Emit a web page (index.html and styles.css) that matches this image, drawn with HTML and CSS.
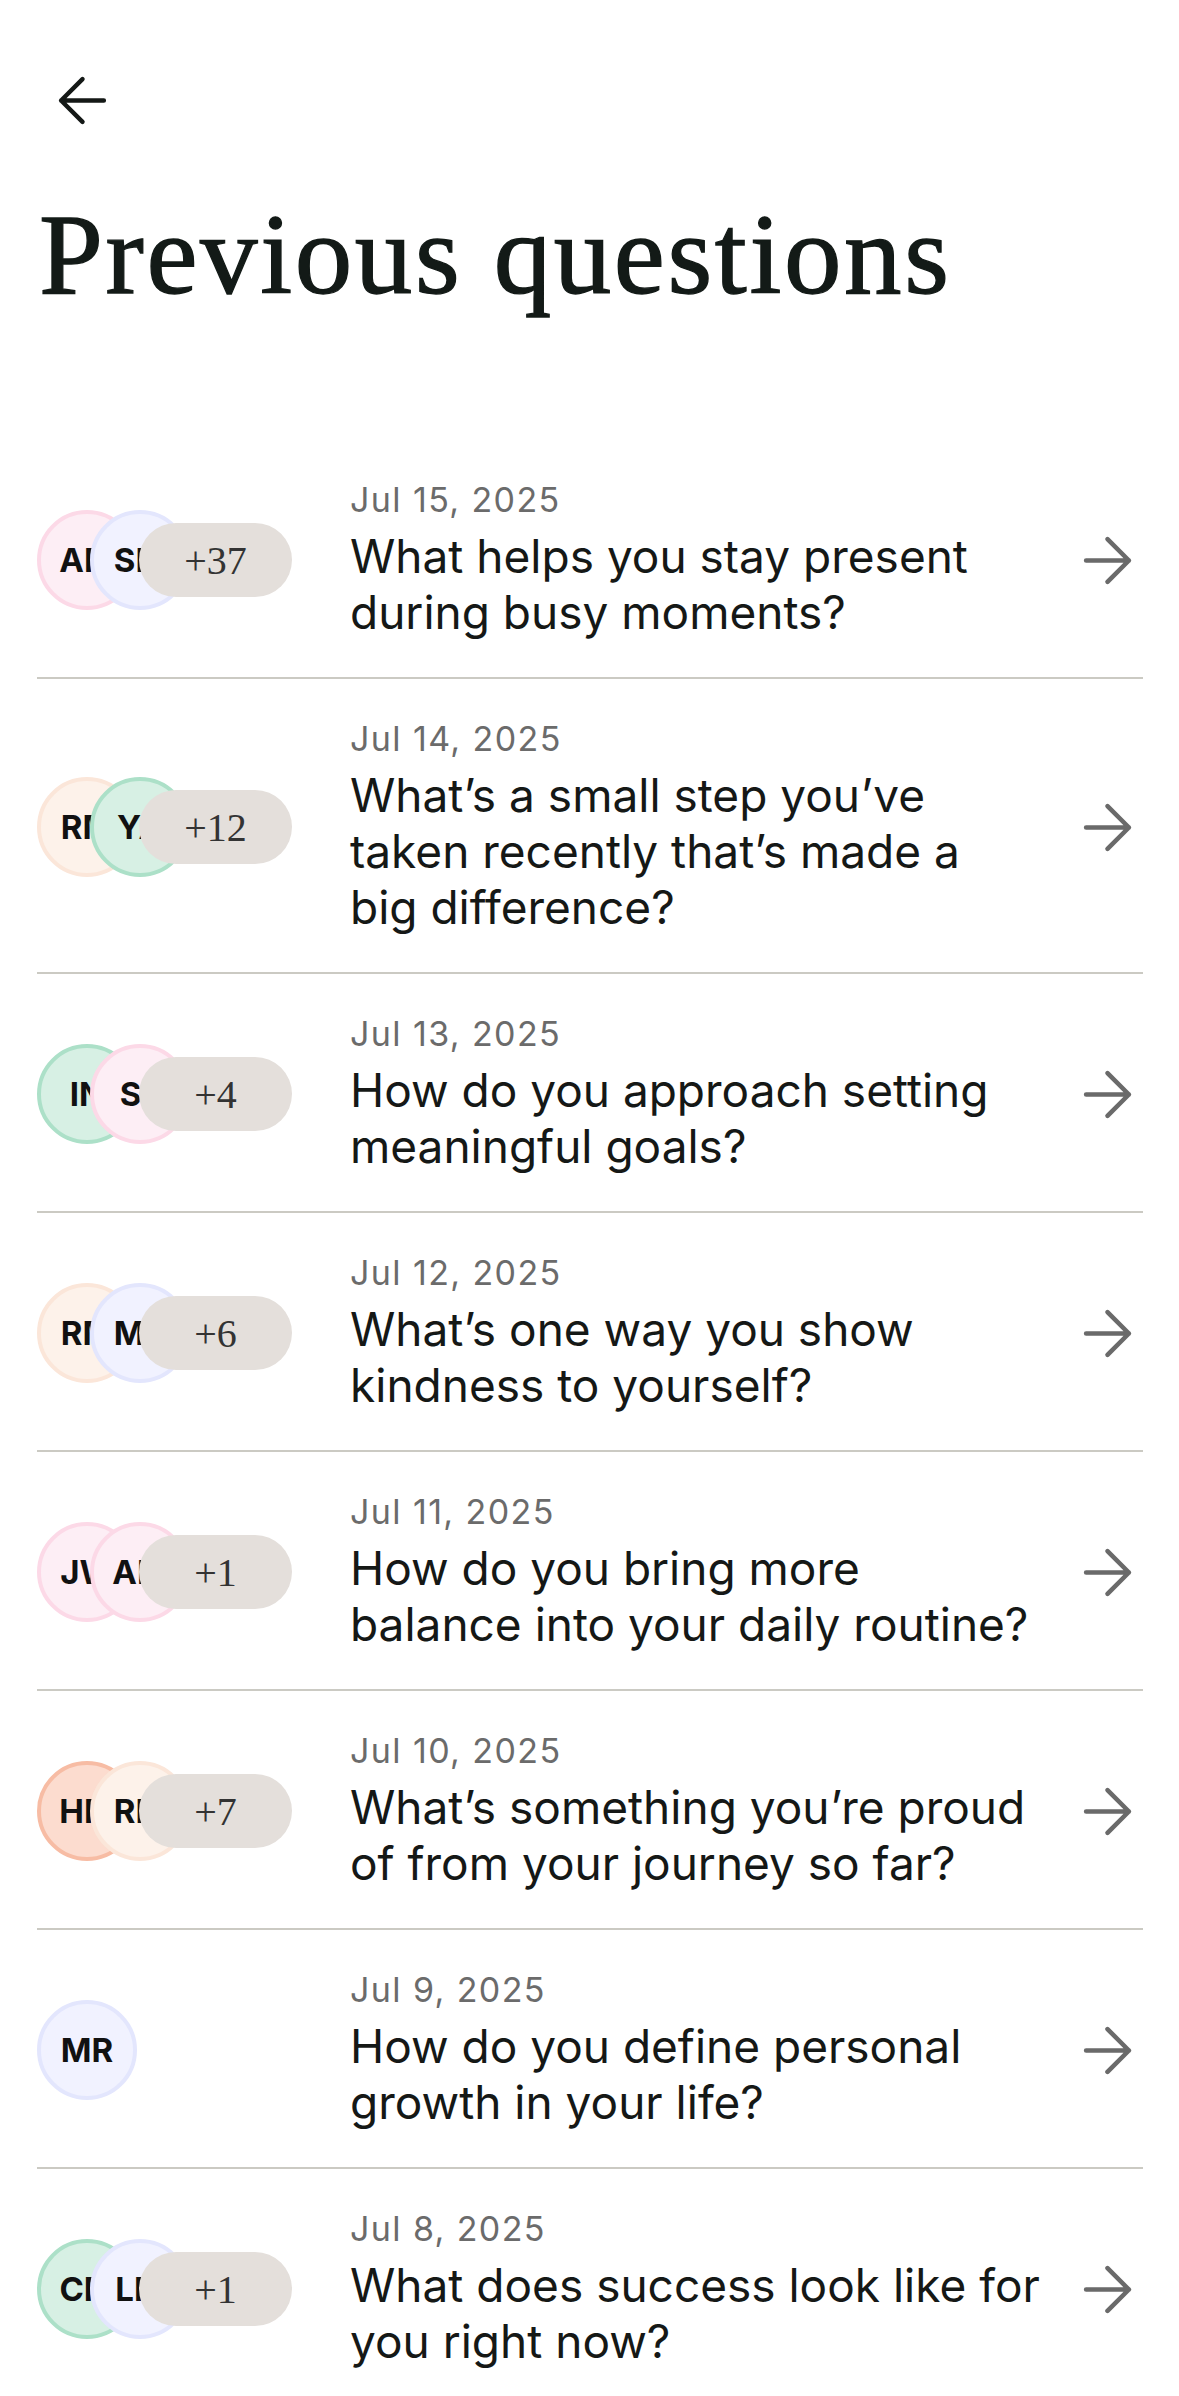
FILE: index.html
```html
<!doctype html>
<html lang="en">
<head>
<meta charset="UTF-8">
<title>Previous questions</title>
<link rel="stylesheet" href="styles.css">
</head>
<body>
	<div class="page">
		<div class="top">
			<svg class="back" viewBox="3 3 18 18" width="55" height="55"><path d="M19 12H5M12 19l-7-7 7-7"/></svg>
		</div>
		<h1 class="title">Previous questions</h1>

		<div class="list">
			<div class="row">
				<div class="avatars">
					<div class="av pink">AM</div>
					<div class="av lilac">SM</div>
					<div class="more">+37</div>
				</div>
				<div class="q">
					<div class="date">Jul 15, 2025</div>
					<div class="text">What helps you stay present<br>during busy moments?</div>
				</div>
				<svg class="go" viewBox="3 3 18 18" width="55" height="55"><path d="M5 12h14M12 5l7 7-7 7"/></svg>
			</div>
			<div class="row">
				<div class="avatars">
					<div class="av peach">RM</div>
					<div class="av green">YA</div>
					<div class="more">+12</div>
				</div>
				<div class="q">
					<div class="date">Jul 14, 2025</div>
					<div class="text">What’s a small step you’ve<br>taken recently that’s made a<br>big difference?</div>
				</div>
				<svg class="go" viewBox="3 3 18 18" width="55" height="55"><path d="M5 12h14M12 5l7 7-7 7"/></svg>
			</div>
			<div class="row">
				<div class="avatars">
					<div class="av green">IN</div>
					<div class="av pink">SL</div>
					<div class="more">+4</div>
				</div>
				<div class="q">
					<div class="date">Jul 13, 2025</div>
					<div class="text">How do you approach setting<br>meaningful goals?</div>
				</div>
				<svg class="go" viewBox="3 3 18 18" width="55" height="55"><path d="M5 12h14M12 5l7 7-7 7"/></svg>
			</div>
			<div class="row">
				<div class="avatars">
					<div class="av peach">RM</div>
					<div class="av lilac">MR</div>
					<div class="more">+6</div>
				</div>
				<div class="q">
					<div class="date">Jul 12, 2025</div>
					<div class="text">What’s one way you show<br>kindness to yourself?</div>
				</div>
				<svg class="go" viewBox="3 3 18 18" width="55" height="55"><path d="M5 12h14M12 5l7 7-7 7"/></svg>
			</div>
			<div class="row">
				<div class="avatars">
					<div class="av pink">JW</div>
					<div class="av pink">AM</div>
					<div class="more">+1</div>
				</div>
				<div class="q">
					<div class="date">Jul 11, 2025</div>
					<div class="text">How do you bring more<br>balance into your daily routine?</div>
				</div>
				<svg class="go" viewBox="3 3 18 18" width="55" height="55"><path d="M5 12h14M12 5l7 7-7 7"/></svg>
			</div>
			<div class="row">
				<div class="avatars">
					<div class="av coral">HM</div>
					<div class="av peach">RM</div>
					<div class="more">+7</div>
				</div>
				<div class="q">
					<div class="date">Jul 10, 2025</div>
					<div class="text">What’s something you’re proud<br>of from your journey so far?</div>
				</div>
				<svg class="go" viewBox="3 3 18 18" width="55" height="55"><path d="M5 12h14M12 5l7 7-7 7"/></svg>
			</div>
			<div class="row">
				<div class="avatars">
					<div class="av lilac">MR</div>
				</div>
				<div class="q">
					<div class="date">Jul 9, 2025</div>
					<div class="text">How do you define personal<br>growth in your life?</div>
				</div>
				<svg class="go" viewBox="3 3 18 18" width="55" height="55"><path d="M5 12h14M12 5l7 7-7 7"/></svg>
			</div>
			<div class="row">
				<div class="avatars">
					<div class="av green">CM</div>
					<div class="av lilac">LM</div>
					<div class="more">+1</div>
				</div>
				<div class="q">
					<div class="date">Jul 8, 2025</div>
					<div class="text">What does success look like for<br>you right now?</div>
				</div>
				<svg class="go" viewBox="3 3 18 18" width="55" height="55"><path d="M5 12h14M12 5l7 7-7 7"/></svg>
			</div>
		</div>
	</div>
</body>
</html>
```
FILE: styles.css
```css
body{
	margin:0;
	background:#fff;
	font-family:Inter, "Noto Sans", sans-serif;
	color:#141816;
}
.page{
	padding:0 36px 0 37px;
}
.top{
	padding:73px 0 0 18px;
}
.back{
	display:block;
	fill:none;
	stroke:#141816;
	stroke-width:1.45;
	stroke-linecap:round;
	stroke-linejoin:round;
}
.title{
	margin:69px 0 128px 2px;
	font-family:"Liberation Serif", serif;
	font-weight:400;
	font-size:115px;
	line-height:1;
	letter-spacing:2.6px;
	color:#131a17;
	-webkit-text-stroke:1.3px #131a17;
}
.row{
	display:flex;
	align-items:center;
	padding:40px 8px 37px 0;
	border-bottom:2px solid #cbcac3;
}
.avatars{
	width:313px;
	flex-shrink:0;
	display:flex;
	align-items:center;
}
.av{
	width:100px;
	height:100px;
	box-sizing:border-box;
	border:4px solid;
	border-radius:50%;
	display:flex;
	align-items:center;
	justify-content:center;
	overflow:hidden;
	white-space:nowrap;
	font-size:33px;
	font-weight:700;
	color:#111;
}
.av + .av{
	margin-left:-47px;
}
.pink{ background:#fdeef5; border-color:#fcd9e7; }
.lilac{ background:#f1f2ff; border-color:#e3e6fd; }
.peach{ background:#fdf2ea; border-color:#fbe6d9; }
.green{ background:#d7f0e4; border-color:#ace0c8; }
.coral{ background:#fcdccf; border-color:#f7bca4; }
.more{
	margin-left:-51px;
	width:153px;
	height:74px;
	border-radius:37px;
	background:#e4dfdb;
	display:flex;
	align-items:center;
	justify-content:center;
	font-family:"Liberation Serif", serif;
	font-size:40px;
	color:#333;
}
.q{
	flex:1;
}
.date{
	font-size:34px;
	line-height:40px;
	letter-spacing:1.4px;
	color:#6b6b6b;
}
.text{
	margin-top:8px;
	font-size:46px;
	line-height:56px;
	color:#151816;
}
.go{
	flex-shrink:0;
	fill:none;
	stroke:#6a6a6a;
	stroke-width:1.5;
	stroke-linecap:round;
	stroke-linejoin:round;
}
```
